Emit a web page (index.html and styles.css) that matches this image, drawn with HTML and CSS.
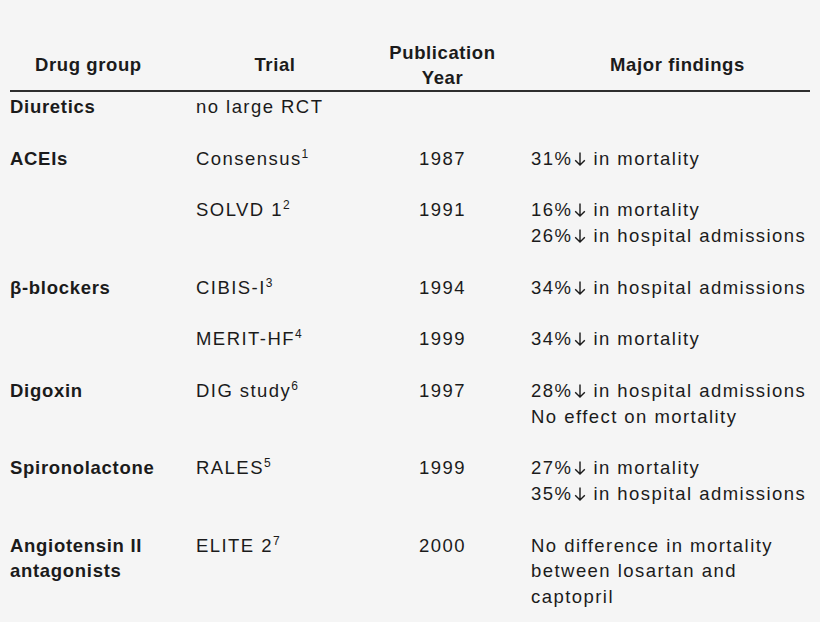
FILE: index.html
```html
<!DOCTYPE html>
<html lang="en">
<head>
<meta charset="utf-8">
<title>Heart failure trials</title>
<link rel="stylesheet" href="styles.css">
</head>
<body>
<div class="table">
  <div class="row head">
    <div class="h h-group">Drug group</div>
    <div class="h h-trial">Trial</div>
    <div class="h h-year">Publication<br>Year</div>
    <div class="h h-find">Major findings</div>
  </div>
  <div class="body">
    <div class="row">
      <div class="group">Diuretics</div>
      <div class="trial">no large RCT</div>
      <div class="year"></div>
      <div class="find"></div>
    </div>
    <div class="row">
      <div class="group">ACEIs</div>
      <div class="trial">Consensus<sup>1</sup></div>
      <div class="year">1987</div>
      <div class="find"><div>31%<svg class="arr" viewBox="0 0 12 14"><path d="M6 0.5V13M1.2 8.2L6 13L10.8 8.2"/></svg>in mortality</div></div>
    </div>
    <div class="row">
      <div class="group"></div>
      <div class="trial">SOLVD 1<sup>2</sup></div>
      <div class="year">1991</div>
      <div class="find"><div>16%<svg class="arr" viewBox="0 0 12 14"><path d="M6 0.5V13M1.2 8.2L6 13L10.8 8.2"/></svg>in mortality</div><div>26%<svg class="arr" viewBox="0 0 12 14"><path d="M6 0.5V13M1.2 8.2L6 13L10.8 8.2"/></svg>in hospital admissions</div></div>
    </div>
    <div class="row">
      <div class="group">β-blockers</div>
      <div class="trial">CIBIS-I<sup>3</sup></div>
      <div class="year">1994</div>
      <div class="find"><div>34%<svg class="arr" viewBox="0 0 12 14"><path d="M6 0.5V13M1.2 8.2L6 13L10.8 8.2"/></svg>in hospital admissions</div></div>
    </div>
    <div class="row">
      <div class="group"></div>
      <div class="trial">MERIT-HF<sup>4</sup></div>
      <div class="year">1999</div>
      <div class="find"><div>34%<svg class="arr" viewBox="0 0 12 14"><path d="M6 0.5V13M1.2 8.2L6 13L10.8 8.2"/></svg>in mortality</div></div>
    </div>
    <div class="row">
      <div class="group">Digoxin</div>
      <div class="trial">DIG study<sup>6</sup></div>
      <div class="year">1997</div>
      <div class="find"><div>28%<svg class="arr" viewBox="0 0 12 14"><path d="M6 0.5V13M1.2 8.2L6 13L10.8 8.2"/></svg>in hospital admissions</div><div>No effect on mortality</div></div>
    </div>
    <div class="row">
      <div class="group">Spironolactone</div>
      <div class="trial">RALES<sup>5</sup></div>
      <div class="year">1999</div>
      <div class="find"><div>27%<svg class="arr" viewBox="0 0 12 14"><path d="M6 0.5V13M1.2 8.2L6 13L10.8 8.2"/></svg>in mortality</div><div>35%<svg class="arr" viewBox="0 0 12 14"><path d="M6 0.5V13M1.2 8.2L6 13L10.8 8.2"/></svg>in hospital admissions</div></div>
    </div>
    <div class="row last">
      <div class="group"><div>Angiotensin II</div><div>antagonists</div></div>
      <div class="trial">ELITE 2<sup>7</sup></div>
      <div class="year">2000</div>
      <div class="find"><div>No difference in mortality</div><div>between losartan and</div><div>captopril</div></div>
    </div>
  </div>
</div>
</body>
</html>
```

FILE: styles.css
```css
html, body {
  margin: 0;
  padding: 0;
  background: #f5f5f5;
}

body {
  font-family: "Liberation Sans", Arial, sans-serif;
  font-size: 18.5px;
  color: #1b1b1b;
}

.table {
  width: 800px;
  padding: 41px 0 0 10px;
}

.row {
  display: grid;
  grid-template-columns: 186px 158px 177px 279px;
  line-height: 25.8px;
  padding-bottom: 25.8px;
}

.row.last {
  padding-bottom: 0;
}

.row.head {
  padding-bottom: 0;
  line-height: 24.5px;
  align-items: center;
  border-bottom: 2px solid #2e2e2e;
}

.h {
  font-weight: bold;
  letter-spacing: 0.6px;
}

.h-group {
  padding-left: 25px;
}

.h-trial,
.h-year {
  text-align: center;
}

.h-find {
  text-align: center;
  padding-left: 14px;
}

.body {
  padding-top: 2px;
}

.group {
  font-weight: bold;
  letter-spacing: 0.7px;
  white-space: nowrap;
}

.trial,
.find {
  letter-spacing: 1.45px;
  white-space: nowrap;
}

.year {
  text-align: center;
  letter-spacing: 1.45px;
}

.arr {
  width: 12px;
  height: 14px;
  margin: 0 7px 0 2px;
  vertical-align: -1px;
  fill: none;
  stroke: #1b1b1b;
  stroke-width: 1.4;
}

sup {
  font-size: 12px;
  line-height: 0;
  vertical-align: 7px;
  letter-spacing: 0;
}
```
